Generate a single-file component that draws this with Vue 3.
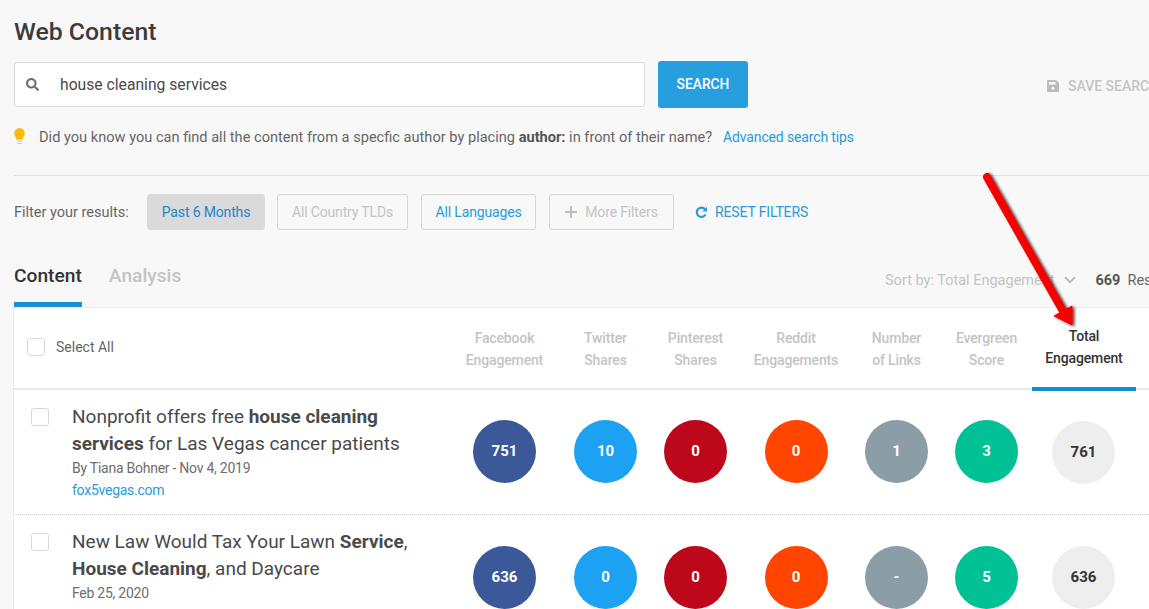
<template>
  <div class="page">
    <h1 class="title">Web Content</h1>

    <div class="search-row">
      <div class="search-box">
        <svg class="search-icon" viewBox="0 0 512 512" fill="currentColor">
          <path d="M505 442.700L405.300 343c-4.500-4.500-10.600-7-17-7H372c27.600-35.300 44-79.700 44-128C416 93.100 322.900 0 208 0S0 93.100 0 208s93.100 208 208 208c48.300 0 92.700-16.400 128-44v16.300c0 6.400 2.500 12.500 7 17l99.700 99.700c9.400 9.400 24.600 9.400 33.900 0l28.300-28.300c9.400-9.400 9.400-24.600.1-34zM208 336c-70.700 0-128-57.200-128-128 0-70.700 57.200-128 128-128 70.700 0 128 57.200 128 128 0 70.700-57.200 128-128 128z" />
        </svg>
        <span class="search-text">house cleaning services</span>
      </div>
      <button type="button" class="search-btn">SEARCH</button>
      <div class="save-search">
        <svg class="save-icon" viewBox="0 0 12 12" fill="currentColor">
          <path fill-rule="evenodd" d="M1 0h8l3 3v8a1 1 0 0 1-1 1H1a1 1 0 0 1-1-1V1a1 1 0 0 1 1-1Zm1 2v2.500h6.500V2H2Zm4 4.700a1.500 1.500 0 1 0 0 3 1.500 1.500 0 0 0 0-3Z" />
        </svg>
        <span>SAVE SEARCH</span>
      </div>
    </div>

    <p class="hint">
      <svg class="bulb" viewBox="0 0 10 16">
        <path fill="#ffba08" d="M5 0a5 5 0 0 1 5 5c0 2.500-1.700 3.600-2.200 6H2.200C1.700 8.600 0 7.500 0 5a5 5 0 0 1 5-5Z" />
        <path fill="#c9c9c9" d="M2.500 12h5v1h-5zM3 14h4v1H3z" />
      </svg>
      <span>Did you know you can find all the content from a specfic author by placing <b>author:</b> in front of their name?</span>
      <a class="tips">Advanced search tips</a>
    </p>

    <div class="filters">
      <span class="filter-label">Filter your results:</span>
      <button type="button" class="chip chip-active">Past 6 Months</button>
      <button type="button" class="chip chip-muted">All Country TLDs</button>
      <button type="button" class="chip chip-blue">All Languages</button>
      <button type="button" class="chip chip-muted chip-more">
        <svg class="plus" viewBox="0 0 12 12" fill="currentColor"><path d="M5 0h2v5h5v2H7v5H5V7H0V5h5Z" /></svg>
        More Filters
      </button>
      <a class="reset">
        <svg class="reset-icon" viewBox="0 0 14 14" fill="none" stroke="currentColor" stroke-width="2.400">
          <path d="M11.300 9.200A5 5 0 1 1 10.800 3.600" />
          <path d="M13 .8v5H8Z" fill="currentColor" stroke="none" />
        </svg>
        RESET FILTERS
      </a>
    </div>

    <div class="tabs-row">
      <div class="tabs">
        <span class="tab tab-active">Content</span>
        <span class="tab">Analysis</span>
      </div>
      <div class="sort">
        <span class="sort-label">Sort by: Total Engagement</span>
        <svg class="chevron" viewBox="0 0 12 8" fill="none" stroke="currentColor" stroke-width="2"><path d="M1 1.200l5 5 5-5" /></svg>
        <b class="count">669</b>
        <span class="results">Results</span>
      </div>
    </div>

    <section class="panel">
      <div class="grid head">
        <label class="select-all">
          <span class="check"></span>
          <span>Select All</span>
        </label>
        <div
          v-for="col in columns"
          :key="col.key"
          class="col-head"
          :class="{ 'col-current': col.key === 'total' }"
        >
          {{ col.top }}<br />{{ col.bottom }}
        </div>
      </div>

      <article v-for="row in rows" :key="row.id" class="grid row">
        <div class="article">
          <span class="check"></span>
          <div class="article-body">
            <h2 class="article-title">
              <template v-for="(part, i) in row.title" :key="i">
                <b v-if="part.bold">{{ part.text }}</b>
                <template v-else>{{ part.text }}</template>
              </template>
            </h2>
            <div class="byline">{{ row.byline }}</div>
            <a v-if="row.site" class="site">{{ row.site }}</a>
          </div>
        </div>
        <div v-for="col in columns" :key="col.key" class="cell">
          <span class="bubble" :class="`bubble-${col.key}`">{{ row.values[col.key] }}</span>
        </div>
      </article>
    </section>

    <svg class="arrow" viewBox="0 0 1149 609">
      <defs>
        <filter id="arrow-shadow" x="-30%" y="-10%" width="160%" height="120%">
          <feDropShadow dx="2" dy="1" stdDeviation="1.500" flood-color="#000" flood-opacity="0.75" />
        </filter>
      </defs>
      <g filter="url(#arrow-shadow)">
        <path d="M987 177L1063 311" stroke="#f80000" stroke-width="8" stroke-linecap="round" fill="none" />
        <path d="M1072 306L1072 325L1054 316Z" fill="#f80000" stroke="#f80000" stroke-width="1" stroke-linejoin="round" />
      </g>
    </svg>
  </div>
</template>

<script setup>
const columns = [
  { key: 'facebook', top: 'Facebook', bottom: 'Engagement' },
  { key: 'twitter', top: 'Twitter', bottom: 'Shares' },
  { key: 'pinterest', top: 'Pinterest', bottom: 'Shares' },
  { key: 'reddit', top: 'Reddit', bottom: 'Engagements' },
  { key: 'links', top: 'Number', bottom: 'of Links' },
  { key: 'evergreen', top: 'Evergreen', bottom: 'Score' },
  { key: 'total', top: 'Total', bottom: 'Engagement' },
]

const rows = [
  {
    id: 1,
    title: [
      { text: 'Nonprofit offers free ' },
      { text: 'house cleaning services', bold: true },
      { text: ' for Las Vegas cancer patients' },
    ],
    byline: 'By Tiana Bohner - Nov 4, 2019',
    site: 'fox5vegas.com',
    values: { facebook: '751', twitter: '10', pinterest: '0', reddit: '0', links: '1', evergreen: '3', total: '761' },
  },
  {
    id: 2,
    title: [
      { text: 'New Law Would Tax Your Lawn ' },
      { text: 'Service', bold: true },
      { text: ', ' },
      { text: 'House Cleaning', bold: true },
      { text: ', and Daycare' },
    ],
    byline: 'Feb 25, 2020',
    site: '',
    values: { facebook: '636', twitter: '0', pinterest: '0', reddit: '0', links: '-', evergreen: '5', total: '636' },
  },
]
</script>

<style>
html,
body {
  height: 609px;
  overflow: hidden;
  background: #f8f8f8;
}
</style>

<style scoped>
.page {
  position: relative;
  width: 1149px;
  height: 609px;
  overflow: hidden;
  background: #f8f8f8;
  color: #444;
  font-family: Roboto, "Liberation Sans", sans-serif;
  font-size: 14px;
}

.title {
  margin: 0;
  padding: 17px 0 0 14px;
  height: 61px;
  box-sizing: border-box;
  font-size: 24.800px;
  line-height: 30px;
  font-weight: 500;
  color: #3c3c3c;
}

.search-row {
  display: flex;
  align-items: center;
  height: 47px;
  padding-left: 14px;
}

.search-box {
  display: flex;
  align-items: center;
  flex: none;
  box-sizing: border-box;
  width: 631px;
  height: 45px;
  background: #fff;
  border: 1px solid #dcdcdc;
  border-radius: 3px;
}

.search-icon {
  width: 13px;
  height: 13px;
  margin-left: 11px;
  color: #6f6f6f;
}

.search-text {
  margin-left: 21px;
  font-size: 15.700px;
  color: #4a4a4a;
}

.search-btn {
  flex: none;
  width: 90px;
  height: 47px;
  margin-left: 13px;
  padding-bottom: 2px;
  border: 0;
  border-radius: 3px;
  background: #259fdd;
  color: #fff;
  font: 500 13.800px Roboto, sans-serif;
}

.save-search {
  display: flex;
  align-items: center;
  gap: 9px;
  margin: 2px 0 0 299px;
  color: #c4c4c4;
  font-size: 14px;
  font-weight: 500;
  white-space: nowrap;
}

.save-icon {
  width: 12px;
  height: 12px;
  flex: none;
  color: #bcbcbc;
}

.hint {
  display: flex;
  align-items: center;
  box-sizing: border-box;
  height: 68px;
  margin: 0 0 0 14px;
  padding-bottom: 10px;
  border-bottom: 1px solid #e2e2e2;
  color: #666;
  font-size: 14.600px;
}

.bulb {
  width: 11px;
  height: 17px;
  margin-right: 14px;
}

.hint b {
  font-weight: 700;
  color: #555;
}

.tips {
  margin-left: 11px;
  color: #2a9ad8;
  font-size: 14px;
  letter-spacing: -0.15px;
}

.filters {
  display: flex;
  align-items: center;
  height: 36px;
  margin: 18px 0 0 14px;
}

.filter-label {
  width: 133px;
  color: #666;
  font-size: 14.500px;
}

.chip {
  box-sizing: border-box;
  height: 36px;
  margin-right: 13px;
  padding: 0;
  border: 1px solid #d6d6d6;
  border-radius: 3px;
  background: transparent;
  font: 14px Roboto, sans-serif;
  letter-spacing: -0.15px;
  white-space: nowrap;
}

.chip-active {
  width: 118px;
  margin-right: 12px;
  border-color: #dadada;
  background: #dadada;
  color: #2086cc;
}

.chip-muted {
  width: 131px;
  color: #c4c4c4;
}

.chip-blue {
  width: 115px;
  color: #2a9ad8;
}

.chip-more {
  display: flex;
  align-items: center;
  justify-content: center;
  gap: 8px;
  width: 125px;
  margin-right: 21px;
}

.plus {
  width: 12px;
  height: 12px;
  color: #bdbdbd;
}

.reset {
  display: flex;
  align-items: center;
  gap: 7px;
  color: #2a9ad8;
  font-size: 14px;
  letter-spacing: -0.15px;
  white-space: nowrap;
}

.reset-icon {
  width: 13px;
  height: 13px;
}

.tabs-row {
  display: flex;
  justify-content: space-between;
  height: 77px;
  margin-left: 14px;
}

.tabs {
  display: flex;
  gap: 27px;
  padding-top: 25px;
}

.tab {
  box-sizing: border-box;
  height: 52px;
  font-size: 19.200px;
  line-height: 42px;
  font-weight: 500;
  color: #c4c4c4;
}

.tab-active {
  color: #333;
  border-bottom: 5px solid #1593d6;
}

.sort {
  display: flex;
  align-items: center;
  height: 30px;
  margin-top: 35px;
  padding-left: 885px;
  position: absolute;
  left: 0;
  white-space: nowrap;
}

.sort-label {
  color: #c4c4c4;
  font-size: 14.500px;
}

.chevron {
  width: 12px;
  height: 8px;
  margin-left: 10px;
  color: #bbb;
}

.count {
  margin-left: 19px;
  font-size: 14.500px;
  font-weight: 700;
  color: #555;
}

.results {
  margin-left: 7px;
  color: #666;
  font-size: 14.500px;
}

.panel {
  margin-left: 13px;
  background: #fff;
  border-left: 1px solid #ececec;
}

.grid {
  display: grid;
  grid-template-columns: 435px 111px 91px 89px 112px 89px 91px 104px;
  padding-right: 13px;
}

.head {
  height: 83px;
  box-sizing: border-box;
  border-top: 1px solid #eee;
  border-bottom: 2px solid #e8e8ee;
}

.select-all {
  display: flex;
  align-items: center;
  gap: 11px;
  padding: 0 0 5px 13px;
  color: #666;
  font-size: 14px;
}

.check {
  display: block;
  box-sizing: border-box;
  flex: none;
  width: 18px;
  height: 18px;
  background: #fff;
  border: 1px solid #d8d8d8;
  border-radius: 3px;
}

.col-head {
  align-self: center;
  margin-top: -2px;
  text-align: center;
  color: #c4c4c4;
  font-size: 14px;
  letter-spacing: -0.15px;
  line-height: 22px;
  font-weight: 500;
}

.col-current {
  align-self: stretch;
  box-sizing: border-box;
  height: 83px;
  margin-top: 0;
  padding-top: 17px;
  border-bottom: 4px solid #0f8fd0;
  color: #333;
}

.row {
  height: 125px;
  box-sizing: border-box;
  border-bottom: 1px dotted #cfcfcf;
}

.article {
  display: flex;
  padding: 18px 0 0 17px;
}

.article-body {
  margin-left: 23px;
  width: 350px;
}

.article-title {
  margin: -5px 0 0;
  font-size: 19px;
  line-height: 27px;
  font-weight: 400;
  color: #4a4a4a;
}

.article-title b {
  font-weight: 700;
}

.byline {
  margin-top: 0;
  color: #6e6e6e;
  font-size: 14px;
  letter-spacing: -0.25px;
  line-height: 22px;
}

.site {
  display: block;
  color: #2a9ad8;
  font-size: 14px;
  letter-spacing: -0.25px;
  line-height: 22px;
}

.cell {
  display: flex;
  justify-content: center;
  padding-top: 31px;
}

.bubble {
  display: flex;
  align-items: center;
  justify-content: center;
  box-sizing: border-box;
  width: 63px;
  height: 63px;
  padding-bottom: 2px;
  border-radius: 50%;
  color: #fff;
  font-size: 15px;
  font-weight: 700;
}

.row:nth-child(2) .bubble:not(.bubble-total) {
  margin-top: -1px;
}

.bubble-facebook { background: #3b5998; }
.bubble-twitter { background: #1da1f2; }
.bubble-pinterest { background: #bd081c; }
.bubble-reddit { background: #ff4500; }
.bubble-links { background: #8b9ea7; }
.bubble-evergreen { background: #00c095; }
.bubble-total {
  margin-left: -1px;
  background: #eee;
  color: #333;
}

.arrow {
  position: absolute;
  left: 0;
  top: 0;
  width: 1149px;
  height: 609px;
  pointer-events: none;
}
</style>
